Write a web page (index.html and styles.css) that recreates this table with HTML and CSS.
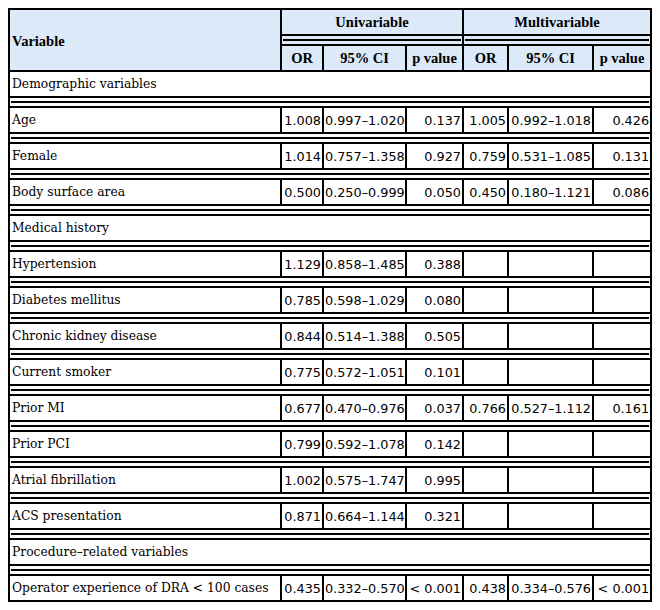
FILE: index.html
```html
<!DOCTYPE html>
<html>
<head>
<meta charset="utf-8">
<link rel="stylesheet" href="styles.css">
</head>
<body>
<table class="t">
<colgroup>
<col class="c-var"><col class="c-or"><col class="c-ci"><col class="c-p"><col class="c-or2"><col class="c-ci2"><col class="c-p2">
</colgroup>
<thead>
<tr class="h1"><th rowspan="3" class="var">Variable</th><th colspan="3">Univariable</th><th colspan="3">Multivariable</th></tr>
<tr class="sep"><td colspan="3"><div class="rule"></div></td><td colspan="3"><div class="rule"></div></td></tr>
<tr class="h2"><th>OR</th><th>95% CI</th><th>p value</th><th>OR</th><th>95% CI</th><th>p value</th></tr>
</thead>
<tbody>
<tr class="sec"><td colspan="7">Demographic variables</td></tr>
<tr class="sep"><td colspan="7"><div class="rule"></div></td></tr>
<tr><td>Age</td><td class="n">1.008</td><td class="n">0.997–1.020</td><td class="n">0.137</td><td class="n">1.005</td><td class="n">0.992–1.018</td><td class="n">0.426</td></tr>
<tr class="sep"><td colspan="7"><div class="rule"></div></td></tr>
<tr><td>Female</td><td class="n">1.014</td><td class="n">0.757–1.358</td><td class="n">0.927</td><td class="n">0.759</td><td class="n">0.531–1.085</td><td class="n">0.131</td></tr>
<tr class="sep"><td colspan="7"><div class="rule"></div></td></tr>
<tr><td>Body surface area</td><td class="n">0.500</td><td class="n">0.250–0.999</td><td class="n">0.050</td><td class="n">0.450</td><td class="n">0.180–1.121</td><td class="n">0.086</td></tr>
<tr class="sep"><td colspan="7"><div class="rule"></div></td></tr>
<tr class="sec"><td colspan="7">Medical history</td></tr>
<tr class="sep"><td colspan="7"><div class="rule"></div></td></tr>
<tr><td>Hypertension</td><td class="n">1.129</td><td class="n">0.858–1.485</td><td class="n">0.388</td><td></td><td></td><td></td></tr>
<tr class="sep"><td colspan="7"><div class="rule"></div></td></tr>
<tr><td>Diabetes mellitus</td><td class="n">0.785</td><td class="n">0.598–1.029</td><td class="n">0.080</td><td></td><td></td><td></td></tr>
<tr class="sep"><td colspan="7"><div class="rule"></div></td></tr>
<tr><td>Chronic kidney disease</td><td class="n">0.844</td><td class="n">0.514–1.388</td><td class="n">0.505</td><td></td><td></td><td></td></tr>
<tr class="sep"><td colspan="7"><div class="rule"></div></td></tr>
<tr><td>Current smoker</td><td class="n">0.775</td><td class="n">0.572–1.051</td><td class="n">0.101</td><td></td><td></td><td></td></tr>
<tr class="sep"><td colspan="7"><div class="rule"></div></td></tr>
<tr><td>Prior MI</td><td class="n">0.677</td><td class="n">0.470–0.976</td><td class="n">0.037</td><td class="n">0.766</td><td class="n">0.527–1.112</td><td class="n">0.161</td></tr>
<tr class="sep"><td colspan="7"><div class="rule"></div></td></tr>
<tr><td>Prior PCI</td><td class="n">0.799</td><td class="n">0.592–1.078</td><td class="n">0.142</td><td></td><td></td><td></td></tr>
<tr class="sep"><td colspan="7"><div class="rule"></div></td></tr>
<tr><td>Atrial fibrillation</td><td class="n">1.002</td><td class="n">0.575–1.747</td><td class="n">0.995</td><td></td><td></td><td></td></tr>
<tr class="sep"><td colspan="7"><div class="rule"></div></td></tr>
<tr><td>ACS presentation</td><td class="n">0.871</td><td class="n">0.664–1.144</td><td class="n">0.321</td><td></td><td></td><td></td></tr>
<tr class="sep"><td colspan="7"><div class="rule"></div></td></tr>
<tr class="sec"><td colspan="7">Procedure–related variables</td></tr>
<tr class="sep"><td colspan="7"><div class="rule"></div></td></tr>
<tr><td>Operator experience of DRA &lt; 100 cases</td><td class="n">0.435</td><td class="n">0.332–0.570</td><td class="n">&lt; 0.001</td><td class="n">0.438</td><td class="n">0.334–0.576</td><td class="n">&lt; 0.001</td></tr>
</tbody>
</table>
</body>
</html>
```
FILE: styles.css
```css
html, body {
  background: #fff;
}
body {
  margin: 8px;
  font-family: "DejaVu Serif", serif;
  font-size: 12.3px;
  color: #000;
}
.t {
  width: 644px;
  table-layout: fixed;
  border-collapse: separate;
  border-spacing: 0;
  border-left: 2px solid #000;
  border-top: 2px solid #000;
}
.c-var { width: 272px; }
.c-or { width: 42px; }
.c-ci { width: 83px; }
.c-p { width: 57px; }
.c-or2 { width: 45px; }
.c-ci2 { width: 85px; }
.c-p2 { width: 58px; }
th, td {
  border-right: 2px solid #000;
  border-bottom: 2px solid #000;
  padding: 0 2px;
  height: 24px;
  white-space: nowrap;
  overflow: hidden;
}
th {
  background: #dbe9f9;
  font-family: "Liberation Serif", serif;
  font-weight: bold;
  font-size: 14.5px;
  text-align: center;
  vertical-align: middle;
}
th.var {
  text-align: left;
  padding-top: 2px;
}
td {
  text-align: left;
  vertical-align: middle;
}
td.n {
  font-family: "DejaVu Sans", sans-serif;
  font-size: 12.8px;
  text-align: right;
  padding: 0 1px;
}
.sep td {
  height: 8px;
  padding: 0 1px;
}
thead .sep td {
  background: #dbe9f9;
}
.rule {
  height: 2px;
  margin: 3px 0;
  background: #000;
}
```
